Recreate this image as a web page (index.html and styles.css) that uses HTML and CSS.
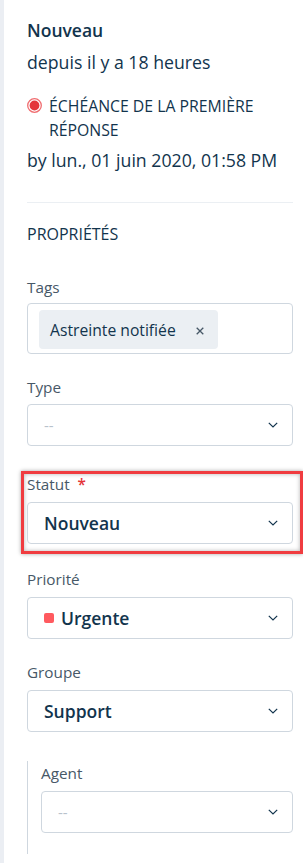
FILE: index.html
```html
<!DOCTYPE html>
<html lang="fr">
<head>
<meta charset="utf-8">
<title>Propriétés</title>
<link rel="stylesheet" href="styles.css">
</head>
<body>
<div class="page">
  <div class="ticket-status">
    <div class="status-title">Nouveau</div>
    <div class="since">depuis il y a 18 heures</div>
    <div class="sla">
      <svg class="sla-icon" width="15" height="15" viewBox="0 0 15 15" aria-hidden="true">
        <circle cx="7.5" cy="7.5" r="6.8" fill="#fff" stroke="#f06d70" stroke-width="1.3"/>
        <circle cx="7.5" cy="7.5" r="4.9" fill="#e4363b"/>
      </svg>
      <span class="sla-text">ÉCHÉANCE DE LA PREMIÈRE RÉPONSE</span>
    </div>
    <div class="due">by lun., 01 juin 2020, 01:58 PM</div>
  </div>

  <div class="props">
    <div class="props-title">PROPRIÉTÉS</div>

    <div class="field field-tags">
      <div class="label">Tags</div>
      <div class="tags-box">
        <span class="chip">Astreinte notifiée<svg class="chip-x" width="8" height="8" viewBox="0 0 8 8" aria-label="Retirer"><path d="M0.7 0.7 L7.3 7.3 M7.3 0.7 L0.7 7.3" stroke="#475867" stroke-width="1.3" fill="none"/></svg></span>
      </div>
    </div>

    <div class="field field-type">
      <div class="label">Type</div>
      <div class="select">
        <span class="placeholder">--</span>
        <svg class="chev" width="10" height="6" viewBox="0 0 10 6"><path d="M0.8 0.8 L5 5 L9.2 0.8" fill="none" stroke="#12344d" stroke-width="1.2"/></svg>
      </div>
    </div>

    <div class="field field-statut highlight">
      <div class="label">Statut <span class="req">*</span></div>
      <div class="select">
        <span class="value">Nouveau</span>
        <svg class="chev" width="10" height="6" viewBox="0 0 10 6"><path d="M0.8 0.8 L5 5 L9.2 0.8" fill="none" stroke="#12344d" stroke-width="1.2"/></svg>
      </div>
    </div>

    <div class="field field-prio">
      <div class="label">Priorité</div>
      <div class="select">
        <span class="value"><span class="prio-dot"></span>Urgente</span>
        <svg class="chev" width="10" height="6" viewBox="0 0 10 6"><path d="M0.8 0.8 L5 5 L9.2 0.8" fill="none" stroke="#12344d" stroke-width="1.2"/></svg>
      </div>
    </div>

    <div class="field field-group">
      <div class="label">Groupe</div>
      <div class="select">
        <span class="value">Support</span>
        <svg class="chev" width="10" height="6" viewBox="0 0 10 6"><path d="M0.8 0.8 L5 5 L9.2 0.8" fill="none" stroke="#12344d" stroke-width="1.2"/></svg>
      </div>
    </div>

    <div class="nested">
      <div class="field field-agent">
        <div class="label">Agent</div>
        <div class="select">
          <span class="placeholder">--</span>
          <svg class="chev" width="10" height="6" viewBox="0 0 10 6"><path d="M0.8 0.8 L5 5 L9.2 0.8" fill="none" stroke="#12344d" stroke-width="1.2"/></svg>
        </div>
      </div>
    </div>
  </div>
</div>
</body>
</html>
```

FILE: styles.css
```css
html, body {
  margin: 0;
  padding: 0;
  background: #fff;
}
body {
  font-family: "Open Sans", "Noto Sans", sans-serif;
  color: #12344d;
  overflow: hidden;
}
.page {
  box-sizing: border-box;
  min-height: 863px;
  border-left: 4px solid #ebeef3;
  padding: 18px 10px 0 23px;
}
.status-title {
  font-size: 17.5px;
  font-weight: 600;
  line-height: 24px;
}
.since {
  font-size: 17.7px;
  line-height: 24px;
  margin-top: 8px;
}
.sla {
  display: flex;
  align-items: flex-start;
  margin-top: 20px;
}
.sla-icon {
  flex: none;
  margin-top: 4px;
  margin-right: 7px;
}
.sla-text {
  font-size: 15.8px;
  line-height: 24px;
  width: 230px;
}
.due {
  font-size: 17.7px;
  line-height: 24px;
  margin-top: 6px;
}
.props {
  margin-top: 30px;
  border-top: 1px solid #ebeff3;
}
.props-title {
  font-size: 16px;
  line-height: 20px;
  margin-top: 21px;
}
.field {
  margin-top: 23px;
}
.field-tags { margin-top: 33px; }
.label {
  font-size: 15.3px;
  line-height: 20px;
  color: #475867;
  margin-bottom: 8px;
}
.field-tags .label { margin-bottom: 6px; }
.field-type .label { margin-bottom: 7px; }
.req {
  color: #e43538;
  font-weight: 600;
  margin-left: 4px;
}
.tags-box {
  border: 1px solid #cfd7df;
  border-radius: 4px;
  height: 51px;
  box-sizing: border-box;
  padding: 6px 11px 0 11px;
}
.chip {
  display: inline-flex;
  align-items: center;
  height: 39px;
  box-sizing: border-box;
  padding: 0 14px 0 11px;
  background: #ebeff3;
  border-radius: 4px;
  font-size: 15.7px;
  color: #12344d;
}
.chip-x {
  margin-left: 20px;
  margin-top: 2px;
}
.select {
  box-sizing: border-box;
  height: 42px;
  border: 1px solid #cfd7df;
  border-radius: 4px;
  display: flex;
  align-items: center;
  justify-content: space-between;
  padding: 0 14px 0 16px;
}
.placeholder {
  color: #b8c2cc;
  font-size: 15px;
}
.value {
  font-size: 17.5px;
  font-weight: 600;
  display: inline-flex;
  align-items: center;
}
.prio-dot {
  width: 10px;
  height: 10px;
  border-radius: 2px;
  background: #ff5a5f;
  margin-right: 7px;
}
.chev { flex: none; }
.highlight {
  margin: 25px -10px 0 -6px;
  padding: 0 7px 7px 3px;
  border: 3px solid #f03c40;
  box-shadow: 0 0 4px rgba(0, 0, 0, 0.35), inset 0 0 4px rgba(0, 0, 0, 0.3);
}
.field-prio { margin-top: 15px; }
.nested {
  margin-top: 29px;
  border-left: 1px solid #cfd7df;
  padding: 2px 0 21px 13px;
}
.nested .field { margin-top: 0; }
```
